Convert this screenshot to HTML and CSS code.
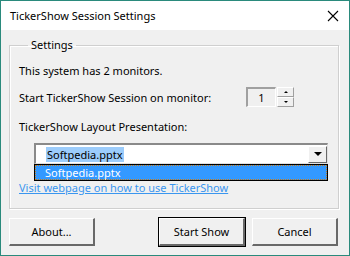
FILE: index.html
```html
<!DOCTYPE html>
<html lang="en">
<head>
    <meta charset="UTF-8">
    <title>TickerShow Session Settings</title>
    <link rel="stylesheet" href="styles.css">
</head>
<body>
    <div class="window">
        <div class="titlebar">
            <span class="title">TickerShow Session Settings</span>
            <svg class="close" width="12" height="12" viewBox="0 0 12 12">
                <path d="M1 1 L11 11 M11 1 L1 11" stroke="#000" stroke-width="1.1"/>
            </svg>
        </div>

        <div class="content">
            <fieldset class="group">
                <legend>Settings</legend>

                <div class="line first">This system has 2 monitors.</div>

                <div class="monitor-row">
                    <span class="monitor-label">Start TickerShow Session on monitor:</span>
                    <div class="spinner">
                        <div class="spin-value">1</div>
                        <div class="spin-buttons">
                            <div class="spin-btn"><span class="arrow up"></span></div>
                            <div class="spin-btn"><span class="arrow down"></span></div>
                        </div>
                    </div>
                </div>

                <div class="line third">TickerShow Layout Presentation:</div>

                <div class="combo-wrap">
                    <div class="combo">
                        <span class="combo-text">Softpedia.pptx</span>
                        <div class="combo-btn"><span class="arrow down big"></span></div>
                    </div>
                    <div class="combo-list">
                        <div class="combo-item">Softpedia.pptx</div>
                    </div>
                </div>

                <a class="link" href="#">Visit webpage on how to use TickerShow</a>
            </fieldset>

            <div class="buttons">
                <button class="btn">About...</button>
                <div class="right-buttons">
                    <button class="btn default">Start Show</button>
                    <button class="btn">Cancel</button>
                </div>
            </div>
        </div>
    </div>
</body>
</html>
```

FILE: styles.css
```css
body {
    margin: 0;
    font-family: "Noto Sans", "Liberation Sans", sans-serif;
    font-size: 11px;
    color: #000;
}
.window {
    width: 350px;
    height: 256px;
    box-sizing: border-box;
    border: 1px solid #2a8a7c;
    background-color: #f0f0f0;
    display: flex;
    flex-direction: column;
}
.titlebar {
    height: 29px;
    background-color: #fff;
    display: flex;
    align-items: center;
    justify-content: space-between;
    padding: 0 10px 0 9px;
    flex-shrink: 0;
}
.title {
    font-size: 11px;
    line-height: 16px;
}
.content {
    padding: 7px 11px 0 8px;
}
.group {
    margin: 0 -1px 0 0;
    padding: 0 0 13px 9px;
    border: 1px solid #cfcfcf;
    box-shadow: inset 1px 1px 0 #fff, 1px 1px 0 #fff;
    height: 172px;
    box-sizing: border-box;
    position: relative;
}
.group legend {
    padding: 0 3px;
    margin-left: 9px;
    line-height: 16px;
}
.line {
    line-height: 16px;
}
.first {
    margin-top: 10px;
}
.monitor-row {
    margin-top: 8px;
    display: flex;
    align-items: center;
    height: 20px;
}
.monitor-label {
    flex: 0 0 227px;
}
.spinner {
    display: flex;
    height: 20px;
}
.spin-value {
    width: 27px;
    height: 17px;
    border-top: 2px solid #a0a0a0;
    border-left: 2px solid #a0a0a0;
    border-right: 1px solid #fff;
    border-bottom: 1px solid #fff;
    background-color: #f0f0f0;
    text-align: center;
    line-height: 17px;
}
.spin-buttons {
    display: flex;
    flex-direction: column;
    margin-left: 1px;
}
.spin-btn {
    width: 15px;
    height: 8px;
    border-top: 1px solid #fff;
    border-left: 1px solid #fff;
    border-right: 1px solid #a0a0a0;
    border-bottom: 1px solid #a0a0a0;
    display: flex;
    align-items: center;
    justify-content: center;
}
.arrow {
    width: 0;
    height: 0;
    border-left: 2px solid transparent;
    border-right: 2px solid transparent;
}
.arrow.up {
    border-bottom: 2px solid #000;
}
.arrow.down {
    border-top: 2px solid #000;
}
.arrow.big {
    border-left-width: 4px;
    border-right-width: 4px;
    border-top-width: 4px;
}
.third {
    margin-top: 12px;
}
.combo-wrap {
    margin: 8px 0 0 15px;
    width: 294px;
    position: relative;
}
.combo {
    height: 18px;
    border-top: 2px solid #8a8a8a;
    border-left: 2px solid #8a8a8a;
    border-right: 1px solid #e0e0e0;
    border-bottom: 1px solid #e0e0e0;
    background-color: #fff;
    display: flex;
    align-items: center;
    justify-content: space-between;
    padding-left: 10px;
}
.combo-text {
    background-color: #9cccfb;
    line-height: 15px;
    padding: 0 2px 0 1px;
}
.combo-btn {
    width: 19px;
    height: 17px;
    box-sizing: border-box;
    border-top: 1px solid #fff;
    border-left: 1px solid #fff;
    border-right: 1px solid #696969;
    border-bottom: 1px solid #696969;
    background-color: #f0f0f0;
    display: flex;
    align-items: center;
    justify-content: center;
}
.combo-list {
    position: absolute;
    left: 0;
    top: 21px;
    width: 294px;
    box-sizing: border-box;
    border: 1px solid #000;
    background-color: #fff;
}
.combo-item {
    background-color: #3399ff;
    color: #fff;
    line-height: 15px;
    padding-left: 10px;
    outline: 1px dotted #c47a1a;
    outline-offset: -1px;
}
.link {
    display: block;
    margin-top: 17px;
    line-height: 14px;
    color: #3a96ef;
    text-decoration: underline;
}
.buttons {
    display: flex;
    justify-content: space-between;
    margin-top: 9px;
}
.right-buttons {
    display: flex;
    gap: 7px;
}
.btn {
    width: 86px;
    height: 28px;
    font-family: "Noto Sans", "Liberation Sans", sans-serif;
    font-size: 11px;
    color: #000;
    background-color: #f0f0f0;
    border-top: 1px solid #fff;
    border-left: 1px solid #fff;
    border-right: 2px solid #696969;
    border-bottom: 2px solid #696969;
    padding: 0;
}
.btn.default {
    outline: 1px solid #000;
    outline-offset: 0;
}
```
